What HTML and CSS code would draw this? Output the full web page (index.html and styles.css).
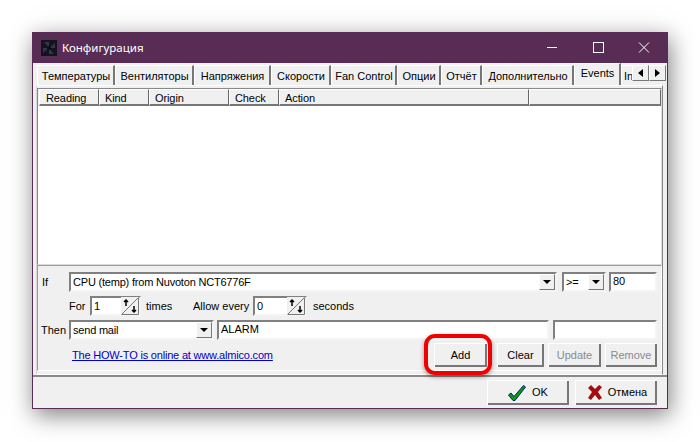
FILE: index.html
```html
<!DOCTYPE html>
<html lang="ru">
<head>
<meta charset="utf-8">
<title>Конфигурация</title>
<link rel="stylesheet" href="styles.css">
</head>
<body>
<div class="window">
  <header class="titlebar">
    <svg class="appicon" width="16" height="16" viewBox="0 0 16 16"><rect width="16" height="16" fill="#14141f"/><path d="M8 8 3 2h5zM8 8l6-5v5zM8 8l5 6H8zM8 8l-6 5V8z" fill="#33334c"/><circle cx="8" cy="8" r="2" fill="#0c0c24"/></svg>
    <span class="title">Конфигурация</span>
    <div class="caption">
      <svg width="46" height="31" viewBox="0 0 46 31"><path d="M18 15.5h10" stroke="#fff"/></svg>
      <svg width="46" height="31" viewBox="0 0 46 31"><rect x="18.500" y="10.500" width="10" height="10" fill="none" stroke="#fff"/></svg>
      <svg width="46" height="31" viewBox="0 0 46 31"><path d="M18 10.500l10 10M28 10.500l-10 10" stroke="#fff" fill="none"/></svg>
    </div>
  </header>
  <div class="body">
    <nav class="tabs">
      <span class="tab w1">Температуры</span>
      <span class="tab w2">Вентиляторы</span>
      <span class="tab w3">Напряжения</span>
      <span class="tab w4">Скорости</span>
      <span class="tab w5">Fan Control</span>
      <span class="tab w6">Опции</span>
      <span class="tab w7">Отчёт</span>
      <span class="tab w8">Дополнительно</span>
      <span class="tab active w9">Events</span>
      <span class="tab w10">In</span>
      <div class="scroller">
        <span class="arrow"><i class="tri left"></i></span>
        <span class="arrow"><i class="tri right"></i></span>
      </div>
    </nav>
    <div class="page">
      <div class="list">
        <div class="head">
          <span class="col c1">Reading</span>
          <span class="col c2">Kind</span>
          <span class="col c3">Origin</span>
          <span class="col c4">Check</span>
          <span class="col c5">Action</span>
          <span class="col c6"></span>
        </div>
        <div class="rows"></div>
      </div>
      <div class="form">
        <div class="row r-if">
          <span class="lbl lbl-if">If</span>
          <div class="combo f-source"><span class="val">CPU (temp) from Nuvoton NCT6776F</span><span class="drop"><i class="tri down"></i></span></div>
          <div class="combo f-op"><span class="val">&gt;=</span><span class="drop"><i class="tri down"></i></span></div>
          <div class="edit f-num">80</div>
        </div>
        <div class="row r-for">
          <span class="txt t-for">For</span>
          <div class="spin s1"><span class="val">1</span><svg class="updown" width="18" height="18" viewBox="0 0 18 18"><rect width="18" height="18" fill="#f0f0f0"/><path d="M.5 17.500h17v-17" stroke="#777" fill="none"/><path d="M1 17 17 1" stroke="#777"/><path d="M5 9V3M3 5l2-2 2 2M13 15V9M11 13l2 2 2-2" stroke="#000" stroke-width="1.500" fill="none"/></svg></div>
          <span class="txt t-times">times</span>
          <span class="txt t-allow">Allow every</span>
          <div class="spin s2"><span class="val">0</span><svg class="updown" width="18" height="18" viewBox="0 0 18 18"><rect width="18" height="18" fill="#f0f0f0"/><path d="M.5 17.500h17v-17" stroke="#777" fill="none"/><path d="M1 17 17 1" stroke="#777"/><path d="M5 9V3M3 5l2-2 2 2M13 15V9M11 13l2 2 2-2" stroke="#000" stroke-width="1.500" fill="none"/></svg></div>
          <span class="txt t-sec">seconds</span>
        </div>
        <div class="row r-then">
          <span class="lbl lbl-then">Then</span>
          <div class="combo f-action"><span class="val">send mail</span><span class="drop"><i class="tri down"></i></span></div>
          <div class="edit f-msg">ALARM</div>
          <div class="edit f-extra"></div>
        </div>
        <div class="row r-btn">
          <a class="link" href="#">The HOW-TO is online at www.almico.com</a>
          <button class="btn b-add">Add</button>
          <button class="btn b-clear">Clear</button>
          <button class="btn b-upd" disabled>Update</button>
          <button class="btn b-rem" disabled>Remove</button>
          <span class="mark"></span>
        </div>
      </div>
    </div>
    <footer class="bottom">
      <button class="btn big"><svg width="18" height="16" viewBox="0 0 18 16"><path d="M.5 10l2.500-2 3 3.500L15.500.5l2 1.500L7 15.500H5z" fill="#0a9a12" stroke="#04246a"/></svg><span>OK</span></button>
      <button class="btn big b-cancel"><svg width="14" height="15" viewBox="0 0 14 15"><path d="M0 3l3-3 4 4 4-4 3 2-4 5 4 6-3 2-4-5-4 5-3-2 4-6z" fill="#a01010"/></svg><span>Отмена</span></button>
    </footer>
  </div>
</div>
</body>
</html>
```

FILE: styles.css
```css
* { box-sizing: border-box; }
html, body { margin: 0; height: 100%; background: #fff; }
body { padding: 32px 32px 0; overflow: hidden; font: 11px/13px "Liberation Sans", Arial, sans-serif; color: #000; }

.window { width: 636px; height: 377px; display: flex; flex-direction: column; background: #f0f0f0; border: 1px solid #582c55; border-top: 0; box-shadow: 2px 6px 22px rgba(0,0,0,.5); }

.titlebar { height: 31px; flex: none; display: flex; align-items: center; background: #582c55; color: #fff; padding-left: 8px; }
.appicon { margin-right: 5px; }
.title { font: 11.500px "Noto Sans", sans-serif; }
.caption { margin-left: auto; display: flex; }
.caption svg { display: block; }

.body { flex: 1; display: flex; flex-direction: column; min-height: 0; }

.tabs { position: relative; height: 22px; flex: none; display: flex; align-items: flex-end; padding-left: 4px; overflow: hidden; }
.tab { height: 20px; padding: 4px 0 0 1px; text-align: center; white-space: nowrap; background: #f0f0f0; border-top: 1px solid #fff; border-left: 1px solid #fff; border-right: 2px solid #777; flex: none; overflow: hidden; }
.tab.active { height: 22px; padding-top: 3px; }
.w1 { width: 78px; } .w2 { width: 79px; } .w3 { width: 77px; } .w4 { width: 60px; } .w5 { width: 66px; } .w6 { width: 44px; } .w7 { width: 41px; } .w8 { width: 92px; } .w9 { width: 47px; } .w10 { width: 14px; text-align: left; padding-left: 2px; border-right: 0; }
.scroller { position: absolute; right: 1px; top: 2px; display: flex; }
.arrow { width: 17px; height: 16px; display: flex; align-items: center; justify-content: center; background: #f0f0f0; border: 1px solid; border-color: #fff #777 #777 #fff; }
.tri { display: block; width: 0; height: 0; border-style: solid; border-color: transparent; }
.tri.left { border-width: 4px 5px 4px 0; border-right-color: #000; }
.tri.right { border-width: 4px 0 4px 5px; border-left-color: #000; }
.tri.down { border-width: 4px 4px 0; border-top-color: #000; }

.page { flex: 1; min-height: 0; margin: 0 4px 0 3px; padding: 2px 0 3px; border: 1px solid #fff; border-right-color: #888; border-left-color: #d8d8d8; display: flex; flex-direction: column; }
.list { height: 177px; flex: none; display: flex; flex-direction: column; background: #fff; border: 1px solid #888; border-bottom-color: #ddd; border-right-color: #ddd; }
.head { height: 17px; flex: none; display: flex; background: #f0f0f0; padding-left: 1px; }
.col { border-top: 1px solid #fff; border-left: 1px solid #fff; border-right: 1px solid #666; border-bottom: 2px solid #777; padding: 2px 0 0 5px; letter-spacing: -.1px; }
.c1 { width: 60px; padding-left: 6px; } .c2 { width: 50px; } .c3 { width: 80px; } .c4 { width: 50px; } .c5 { width: 250px; } .c6 { flex: 1; }
.rows { flex: 1; background: #fff; }

.form { flex: 1; border: 1px solid #9a9a9a; border-right-color: #fff; border-bottom-color: #fff; padding: 6px 4px 0; display: flex; flex-direction: column; min-height: 0; }
.row { display: flex; align-items: center; flex: none; }
.r-if { height: 20px; }
.r-for { height: 20px; margin-top: 4px; padding-left: 27px; }
.r-then { height: 20px; margin-top: 4px; }
.r-btn { position: relative; height: 24px; margin-top: 3px; }

.lbl-if { width: 27px; }
.lbl-then { width: 27px; margin-left: -1px; margin-right: 1px; }
.t-for { width: 21px; }
.t-times { margin-left: 5px; width: 47px; }
.t-allow { width: 60px; }
.t-sec { margin-left: 6px; }

.edit, .combo, .spin { height: 20px; background: #fff; border: 2px solid; border-color: #808080 #f4f4f4 #f4f4f4 #808080; display: flex; align-items: center; flex: none; }
.edit { padding: 0 1px 2px 2px; }
.val { flex: 1; padding: 0 2px; white-space: nowrap; overflow: hidden; letter-spacing: -.2px; }
.drop { width: 16px; height: 16px; display: flex; align-items: center; justify-content: center; background: #f0f0f0; border: 1px solid; border-color: #fff #777 #777 #fff; flex: none; }
.f-source { width: 488px; margin-right: 5px; }
.f-op { width: 44px; margin-right: 3px; }
.f-num { width: 48px; }
.s1 { width: 51px; }
.s2 { width: 54px; }
.updown { flex: none; }
.f-action { width: 145px; margin-right: 3px; }
.f-msg { width: 332px; margin-right: 4px; }
.f-extra { width: 104px; }

.link { margin-left: 30px; width: 362px; padding-top: 1px; color: #0000c8; text-decoration: underline; letter-spacing: -.19px; }
.btn { font: inherit; height: 24px; padding: 1px 0 0; background: #f0f0f0; color: #000; border: 0; box-shadow: inset 1px 1px 0 #fff, inset -2px -2px 0 #777; flex: none; }
.btn:disabled { color: #8a8a8a; }
.b-add { width: 53px; margin-right: 10px; }
.b-clear { width: 47px; margin-right: 4px; }
.b-upd { width: 53px; margin-right: 4px; }
.b-rem { width: 52px; }
.mark { position: absolute; left: 382px; top: -9px; width: 68px; height: 41px; border: 4px solid #f00000; border-radius: 11px; box-shadow: 0 2px 4px rgba(0,0,0,.4); }

.bottom { height: 33px; flex: none; border-top: 2px solid #8a8a8a; display: flex; justify-content: flex-end; align-items: center; gap: 6px; padding-right: 10px; }
.big { width: 82px; height: 25px; padding: 0; display: flex; align-items: center; justify-content: center; gap: 6px; }
.b-cancel { padding-left: 3px; }
.big svg { flex: none; }
```
